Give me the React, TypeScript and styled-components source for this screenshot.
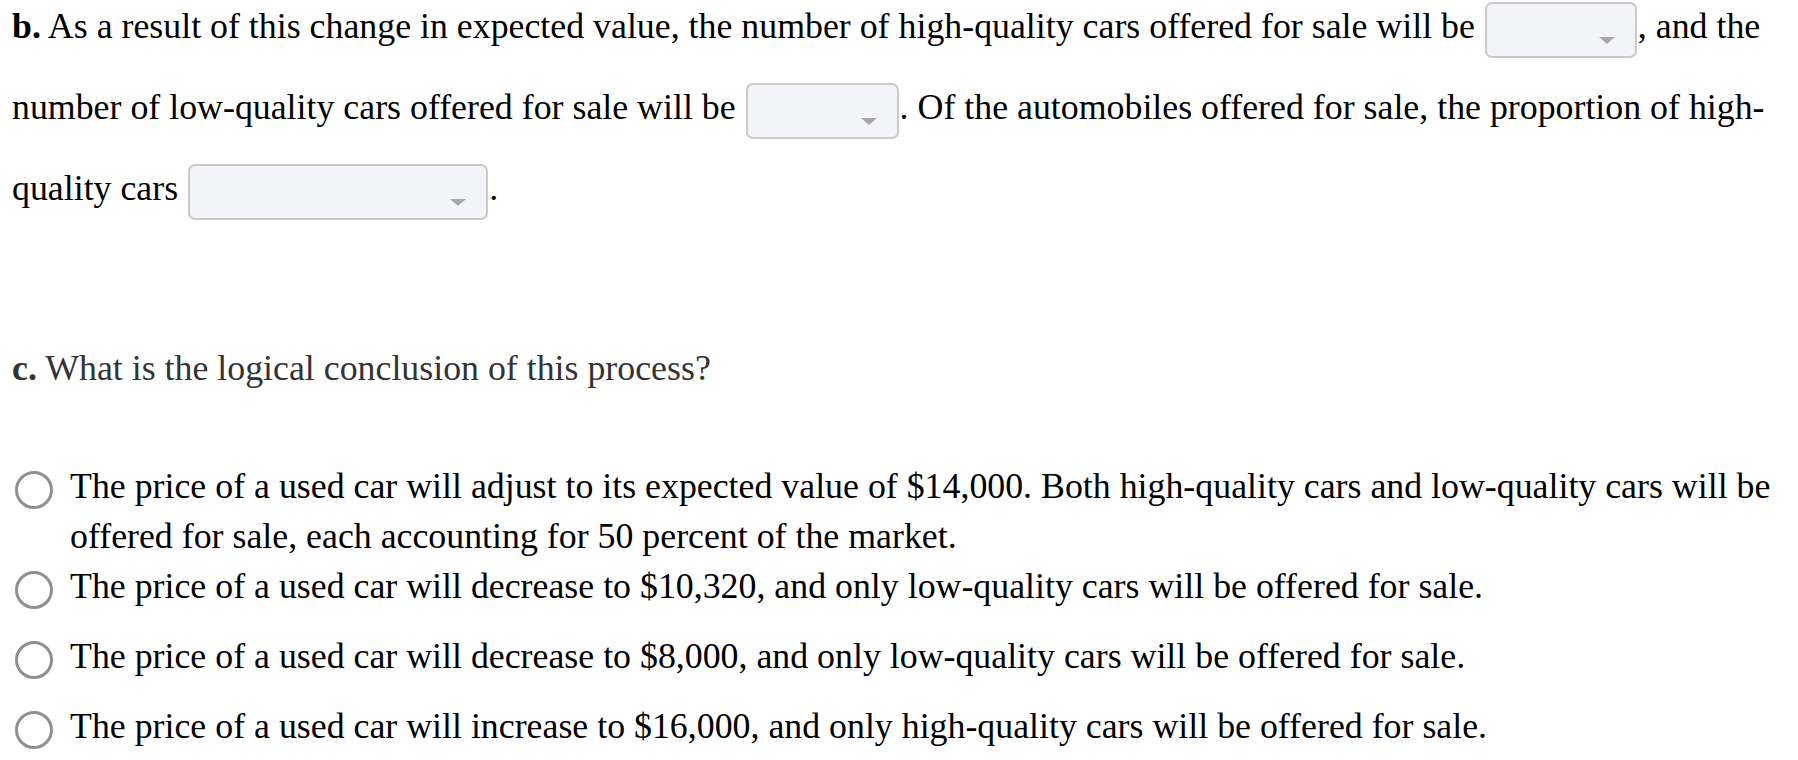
import React from "react";
import styled, { createGlobalStyle } from "styled-components";

const GlobalStyle = createGlobalStyle`
  html, body {
    margin: 0;
    padding: 0;
    background: #ffffff;
  }
  body {
    font-family: "Liberation Serif", "Times New Roman", serif;
    color: #000000;
  }
`;

const Page = styled.div`
  padding: 0 12px 0 12px;
  font-size: 35.85px;
`;

const QuestionText = styled.p`
  margin: 0;
  line-height: 52px;
`;

const Label = styled.b`
  font-weight: 700;
`;

// overflow hidden puts the baseline at the bottom margin edge,
// so vertical-align can place the box exactly against the text
const Dropdown = styled.span<{ $width: number }>`
  display: inline-block;
  overflow: hidden;
  box-sizing: border-box;
  width: ${(p) => p.$width}px;
  height: 56px;
  margin: 0 1px 23px 1px;
  vertical-align: -43px;
  background: #f3f4f7;
  border: 2px solid #cacaca;
  border-radius: 7px;
`;

const Caret = styled.span`
  display: block;
  width: 0;
  height: 0;
  margin: 33px 20px 0 auto;
  border-left: 8px solid transparent;
  border-right: 8px solid transparent;
  border-top: 7px solid #a8a8a8;
`;

const PartC = styled.p`
  margin: 100px 0 0 0;
  line-height: 50px;
  color: #333333;
`;

const Options = styled.ul`
  list-style: none;
  margin: 68px 0 0 0;
  padding: 0;
`;

const Option = styled.li`
  display: flex;
  align-items: flex-start;
  gap: 17px;
  min-height: 70px;
  line-height: 50px;
`;

const Radio = styled.span`
  flex: 0 0 auto;
  box-sizing: border-box;
  width: 38px;
  height: 38px;
  margin: 10px 0 0 3px;
  border: 3.5px solid #8f8f8f;
  border-radius: 50%;
  background: #ffffff;
`;

const OptionText = styled.span`
  flex: 1 1 auto;
`;

const SelectBox: React.FC<{ width: number }> = ({ width }) => (
  <Dropdown $width={width}>
    <Caret />
  </Dropdown>
);

const choices = [
  "The price of a used car will adjust to its expected value of $14,000. Both high-quality cars and low-quality cars will be offered for sale, each accounting for 50 percent of the market.",
  "The price of a used car will decrease to $10,320, and only low-quality cars will be offered for sale.",
  "The price of a used car will decrease to $8,000, and only low-quality cars will be offered for sale.",
  "The price of a used car will increase to $16,000, and only high-quality cars will be offered for sale.",
];

export default function App() {
  return (
    <Page>
      <GlobalStyle />
      <QuestionText>
        <Label>b.</Label> As a result of this change in expected value, the number of high-quality cars offered for sale will be{" "}
        <SelectBox width={152} />, and the number of low-quality cars offered for sale will be{" "}
        <SelectBox width={153} />. Of the automobiles offered for sale, the proportion of high-quality cars{" "}
        <SelectBox width={300} />.
      </QuestionText>
      <PartC>
        <Label>c.</Label> What is the logical conclusion of this process?
      </PartC>
      <Options>
        {choices.map((c, i) => (
          <Option key={i}>
            <Radio />
            <OptionText>{c}</OptionText>
          </Option>
        ))}
      </Options>
    </Page>
  );
}
